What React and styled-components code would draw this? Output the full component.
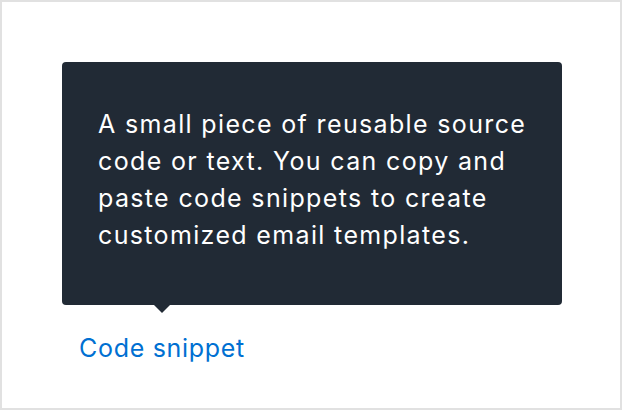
import React from 'react';
import styled, { createGlobalStyle } from 'styled-components';

const GlobalStyle = createGlobalStyle`
  html, body {
    margin: 0;
    padding: 0;
    background: #ffffff;
  }
  body {
    font-family: Inter, "Noto Sans", sans-serif;
    -webkit-font-smoothing: antialiased;
  }
`;

const Frame = styled.div`
  box-sizing: border-box;
  width: 622px;
  height: 410px;
  border: 2px solid #e1e1e1;
  padding: 60px 0 0 60px;
`;

const Anchor = styled.div`
  display: flex;
  flex-direction: column;
  align-items: flex-start;
`;

const Tip = styled.div`
  position: relative;
  box-sizing: border-box;
  width: 500px;
  height: 243px;
  padding: 44px 28px 0 36px;
  background: #212a35;
  border-radius: 4px;
  color: #ffffff;
  font-size: 25px;
  line-height: 37px;
  letter-spacing: 1.35px;

  &::after {
    content: '';
    position: absolute;
    left: 92px;
    bottom: -8px;
    border-left: 8px solid transparent;
    border-right: 8px solid transparent;
    border-top: 8px solid #212a35;
  }
`;

const Trigger = styled.a`
  margin: 25px 0 0 17px;
  color: #0070d2;
  font-size: 25px;
  line-height: 37px;
  letter-spacing: 0.7px;
  text-decoration: none;
  cursor: pointer;
`;

const App = () => {
  return (
    <Frame>
      <GlobalStyle />
      <Anchor>
        <Tip role="tooltip">
          A small piece of reusable source code or text. You can copy and
          paste code snippets to create customized email templates.
        </Tip>
        <Trigger>Code snippet</Trigger>
      </Anchor>
    </Frame>
  );
};

export default App;
